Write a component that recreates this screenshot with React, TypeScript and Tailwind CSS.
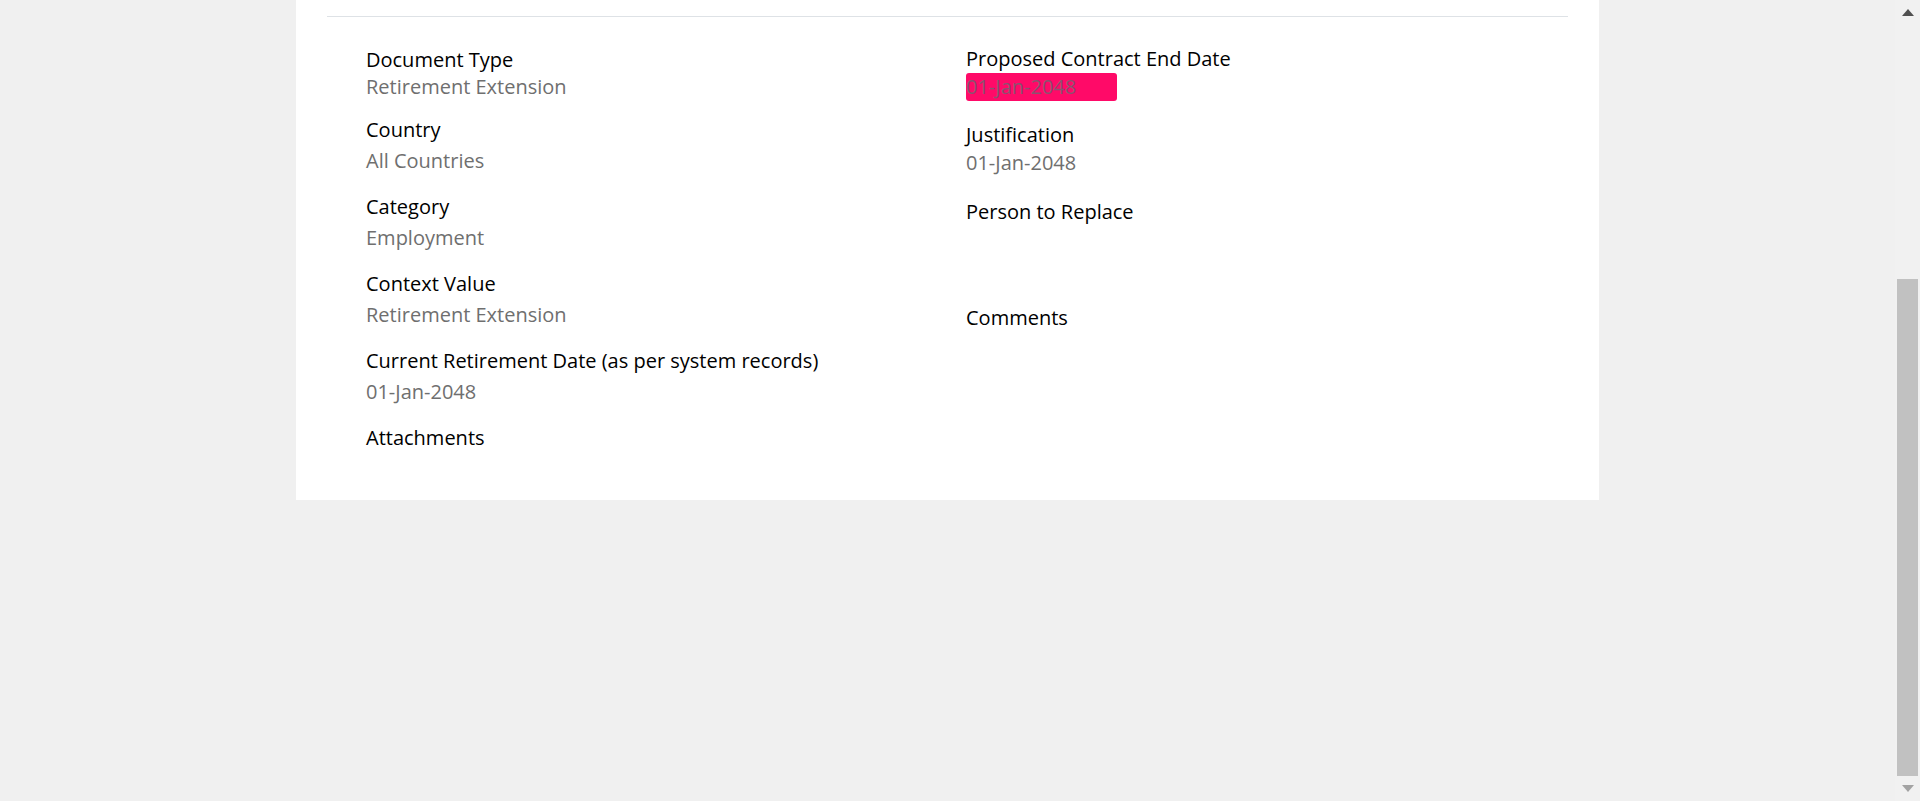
import React from "react";

const font = { fontFamily: '"Open Sans", "Noto Sans", sans-serif' };

type FieldProps = {
  label: string;
  value?: React.ReactNode;
  className?: string;
  valueClassName?: string;
};

const Field = ({ label, value, className = "", valueClassName = "" }: FieldProps) => (
  <div className={`flex flex-col ${className}`}>
    <div className="text-[20px] font-medium leading-[28px] text-black">{label}</div>
    {value !== undefined && (
      <div className={`text-[20px] font-medium leading-[28px] text-[#6f6f6f] ${valueClassName}`}>{value}</div>
    )}
  </div>
);

const Scrollbar = () => (
  <div className="flex h-[801px] w-[25px] shrink-0 flex-col bg-[#f1f1f1]">
    <div className="flex h-[25px] items-center justify-center">
      <svg width="12" height="7" viewBox="0 0 12 7">
        <polygon points="6,0 12,7 0,7" fill="#505050" />
      </svg>
    </div>
    <div className="flex flex-1 flex-col">
      <div className="mx-[2px] mt-[254px] flex-1 bg-[#c1c1c1]" />
    </div>
    <div className="flex h-[25px] items-center justify-center">
      <svg width="12" height="7" viewBox="0 0 12 7">
        <polygon points="0,0 12,0 6,7" fill="#a3a3a3" />
      </svg>
    </div>
  </div>
);

export default function App() {
  return (
    <div className="flex h-[801px] w-full overflow-hidden bg-[#f0f0f0]" style={font}>
      <div className="flex flex-1 justify-center">
        <div className="h-[500px] w-[1303px] bg-white px-[31px] pt-4">
          <div className="h-px bg-[#dee2e6]" />
          <div className="grid grid-cols-[600px_1fr] pl-[39px]">
            {/* left column */}
            <div className="flex flex-col pt-[29px]">
              <Field label="Document Type" value="Retirement Extension" valueClassName="-mt-px" />
              <Field label="Country" value="All Countries" className="mt-[15px]" valueClassName="mt-[3px]" />
              <Field label="Category" value="Employment" className="mt-[18px]" valueClassName="mt-[3px]" />
              <Field label="Context Value" value="Retirement Extension" className="mt-[18px]" valueClassName="mt-[3px]" />
              <Field
                label="Current Retirement Date (as per system records)"
                value="01-Jan-2048"
                className="mt-[18px]"
                valueClassName="mt-[3px]"
              />
              <Field label="Attachments" className="mt-[18px]" />
            </div>
            {/* right column */}
            <div className="flex flex-col pt-[28px]">
              <Field
                label="Proposed Contract End Date"
                value={
                  <span className="inline-block w-[151px] rounded-[3px] bg-[#ff0a68] text-[#8a5470]">
                    01-Jan-2048
                  </span>
                }
              />
              <Field label="Justification" value="01-Jan-2048" className="mt-[20px]" />
              <Field label="Person to Replace" className="mt-[21px]" />
              <Field label="Comments" className="mt-[78px]" />
            </div>
          </div>
        </div>
      </div>
      <Scrollbar />
    </div>
  );
}
